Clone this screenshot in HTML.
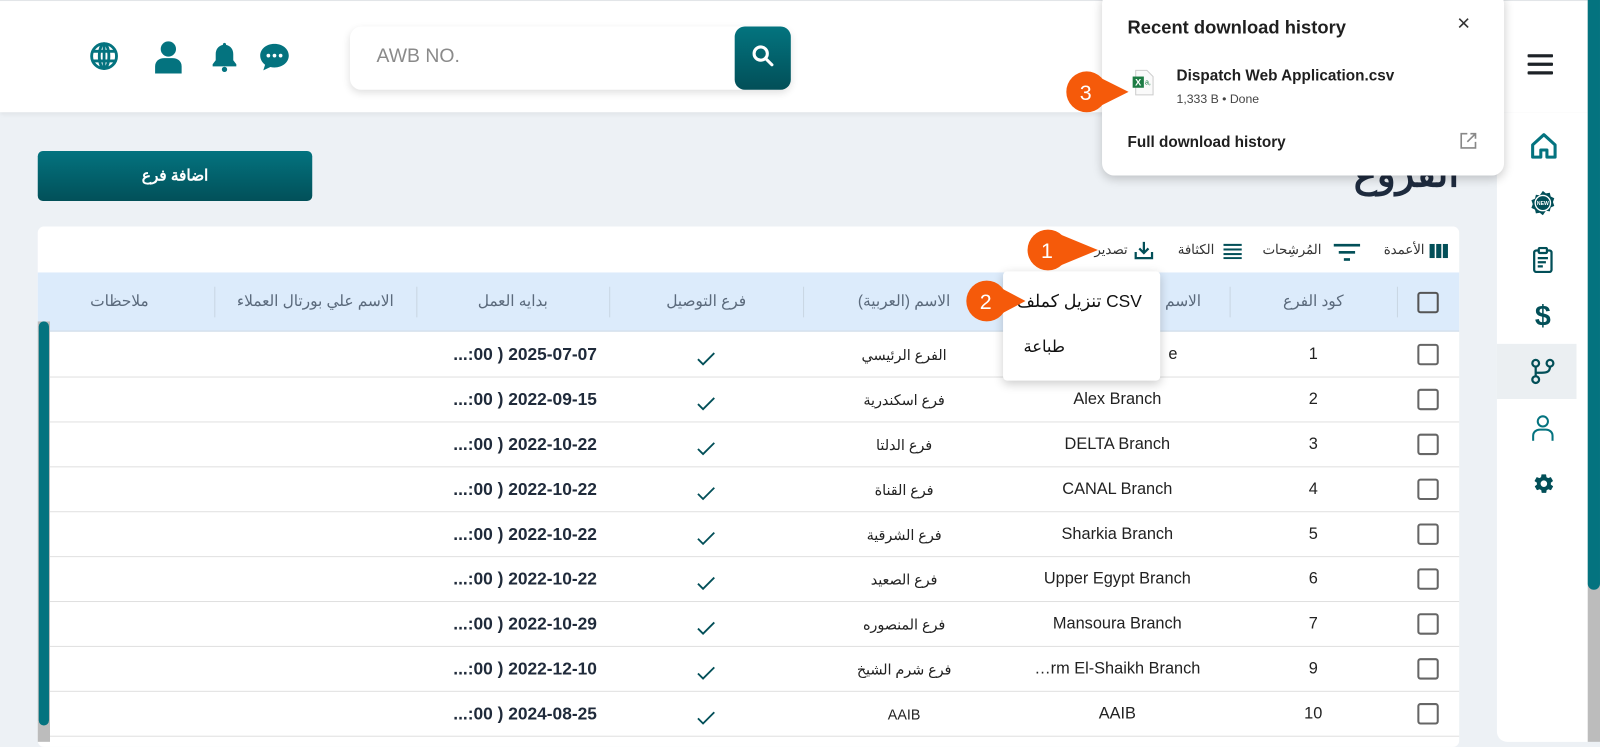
<!DOCTYPE html>
<html><head><meta charset="utf-8"><style>
*{box-sizing:border-box;margin:0;padding:0}
html,body{width:1600px;height:742px;overflow:hidden;background:#edf1f5;font-family:"Liberation Sans","Noto Sans CJK SC",sans-serif}
#w{position:absolute;left:0;top:0;width:1568px;height:727px;transform:scale(1.0204);transform-origin:0 0;background:#edf1f5}
.a{position:absolute}
.hdr{left:0;top:1;width:1556px;height:110px;background:#fff;box-shadow:0 2px 4px rgba(0,0,0,.06);border-top:1px solid #e2e5e8}
.cb{position:absolute;width:21px;height:21px;border:2px solid #666;border-radius:3px}
.row{position:absolute;left:48px;width:1382px;height:44px;border-bottom:1px solid #e0e0e0}
.c{position:absolute;top:0;height:44px;line-height:44px;text-align:center;font-size:16px;color:#222}
.hc{position:absolute;top:0;height:58px;line-height:58px;text-align:center;font-size:15px;color:#5b6a7c}
.sep{position:absolute;top:14px;width:1px;height:30px;background:#c9d6e3}
</style></head><body><div id="w">
<div class="a hdr"></div>
<svg class="a" style="left:87px;top:40px" width="30" height="30" viewBox="0 0 32 32" fill="none" stroke="#04737f" stroke-width="3"><circle cx="16" cy="16" r="13"/><ellipse cx="16" cy="16" rx="5" ry="13"/><path d="M3 11h26M3 21h26M16 3v26"/></svg>
<svg class="a" style="left:151px;top:40px" width="28" height="32" viewBox="0 0 28 32" fill="#04737f"><circle cx="14" cy="8" r="7.5"/><path d="M1 32v-7c0-5 4-8 9-8h8c5 0 9 3 9 8v7z"/></svg>
<svg class="a" style="left:207px;top:41px" width="26" height="30" viewBox="0 0 26 30" fill="#04737f"><path d="M13 1c1 0 1.6.8 1.6 2 4.5 1 7 4.5 7 9v6l3 4v2H1.4v-2l3-4v-6c0-4.5 2.5-8 7-9 0-1.2.6-2 1.6-2z"/><circle cx="13" cy="27" r="2.6"/></svg>
<svg class="a" style="left:254px;top:42px" width="30" height="28" viewBox="0 0 30 28" fill="#04737f"><path d="M15 1C7 1 1 6 1 12.5c0 3.6 1.9 6.8 4.8 8.9L4 27l7-3.3c1.3.3 2.6.4 4 .4 8 0 14-5.2 14-11.6S23 1 15 1z"/><circle cx="9" cy="12.5" r="1.8" fill="#fff"/><circle cx="15" cy="12.5" r="1.8" fill="#fff"/><circle cx="21" cy="12.5" r="1.8" fill="#fff"/></svg>
<div class="a" style="left:343px;top:26px;width:432px;height:62px;background:#fff;border-radius:11px;box-shadow:0 3px 8px rgba(0,0,0,.12)"></div>
<div class="a" style="left:369px;top:45px;font-size:19px;color:#8a8a8a">AWB NO.</div>
<div class="a" style="left:720px;top:26px;width:55px;height:62px;border-radius:10px;background:linear-gradient(#03747f,#024f58)"></div>
<svg class="a" style="left:736px;top:43px" width="24" height="24" viewBox="0 0 24 24" fill="none" stroke="#fff" stroke-width="3"><circle cx="9.5" cy="9.5" r="6.5"/><path d="M14.5 14.5l6 6" stroke-linecap="round"/></svg>
<div class="a" style="left:37px;top:148px;width:269px;height:49px;border-radius:5px;background:linear-gradient(#03737f,#025059);color:#fff;font-weight:bold;font-size:15px;text-align:center;line-height:49px">اضافة فرع</div>
<div class="a" style="left:1290px;top:148px;width:140px;text-align:right;font-size:38px;font-weight:bold;color:#1e2b3e">الفروع</div>
<div class="a" style="left:37px;top:222px;width:1393px;height:510px;background:#fff;border-radius:6px"></div>
<svg class="a" style="left:1400px;top:239px" width="20" height="14" viewBox="0 0 20 14" fill="#024f58"><rect x="1" y="0" width="5" height="14"/><rect x="7.5" y="0" width="5" height="14"/><rect x="14" y="0" width="5" height="14"/></svg>
<div class="a" style="left:1340px;top:237px;width:56px;text-align:right;font-size:13px;color:#333">الأعمدة</div>
<svg class="a" style="left:1307px;top:238px" width="26" height="18" viewBox="0 0 26 18" fill="#024f58"><rect x="0" y="1" width="26" height="2.6"/><rect x="5" y="8" width="16" height="2.6"/><rect x="10" y="15" width="6" height="2.6"/></svg>
<div class="a" style="left:1225px;top:237px;width:70px;text-align:right;font-size:13px;color:#333">المُرشِحات</div>
<svg class="a" style="left:1199px;top:238px" width="18" height="16" viewBox="0 0 18 16" fill="#024f58"><rect y="1" width="18" height="2"/><rect y="5.5" width="18" height="2"/><rect y="10" width="18" height="2"/><rect y="14" width="18" height="2"/></svg>
<div class="a" style="left:1130px;top:237px;width:60px;text-align:right;font-size:13px;color:#333">الكثافة</div>
<svg class="a" style="left:1111px;top:235px" width="20" height="20" viewBox="0 0 20 20" fill="none" stroke="#024f58" stroke-width="2.2"><path d="M10 2v11M5.5 8.5L10 13l4.5-4.5M2 12v6h16v-6"/></svg>
<div class="a" style="left:1050px;top:237px;width:55px;text-align:right;font-size:13px;color:#333">تصدير</div>
<div class="a" style="left:37px;top:267px;width:1393px;height:58px;background:#dcebfb;border-bottom:1px solid #cfdbe6">
 <div class="cb" style="left:1352px;top:19px;border-color:#555"></div>
 <div class="sep" style="left:1332px"></div>
 <div class="hc" style="left:1168px;width:164px">كود الفرع</div>
 <div class="sep" style="left:1168px"></div>
 <div class="hc" style="left:1100px;width:40px;text-align:right">الاسم</div>
 <div class="sep" style="left:948px"></div>
 <div class="hc" style="left:750px;width:198px">الاسم (العربية)</div>
 <div class="sep" style="left:750px"></div>
 <div class="hc" style="left:560px;width:190px">فرع التوصيل</div>
 <div class="sep" style="left:560px"></div>
 <div class="hc" style="left:371px;width:189px">بدايه العمل</div>
 <div class="sep" style="left:371px"></div>
 <div class="hc" style="left:173px;width:198px">الاسم علي بورتال العملاء</div>
 <div class="sep" style="left:173px"></div>
 <div class="hc" style="left:0;width:160px">ملاحظات</div>
</div>
<div id="rows"></div>
<div class="a" style="left:37px;top:315px;width:12px;height:412px;background:#bcbcbc"></div>
<div class="a" style="left:38px;top:315px;width:10px;height:396px;background:#04737f;border-radius:5px"></div>
<div class="a" style="left:1145px;top:326px;width:50px;height:44px;line-height:44px;font-size:16px;color:#222;text-align:left">e</div>
<div class="a" style="left:983px;top:266px;width:154px;height:107px;background:#fff;border-radius:4px;box-shadow:0 3px 10px rgba(0,0,0,.2)">
 <div style="position:absolute;right:18px;top:20px;font-size:17px;color:#111">تنزيل كملف CSV</div>
 <div style="position:absolute;left:20px;top:64px;font-size:16px;color:#111">طباعة</div>
</div>
<div class="a" style="left:1467px;top:110px;width:89px;height:617px;background:#fff;border-radius:0 0 0 10px"></div>
<div class="a" style="left:1467px;top:337px;width:78px;height:54px;background:#ebeff2"></div>
<svg class="a" style="left:1497px;top:53px" width="25" height="20" viewBox="0 0 25 20" fill="#1d2227"><rect y="0" width="25" height="3.2" rx="1"/><rect y="8.4" width="25" height="3.2" rx="1"/><rect y="16.8" width="25" height="3.2" rx="1"/></svg>
<svg class="a" style="left:1500px;top:130px" width="26" height="26" viewBox="0 0 26 26" fill="none" stroke="#04737f" stroke-width="3" stroke-linejoin="round"><path d="M2 12L13 2l11 10v12H16v-7h-6v7H2z"/></svg>
<svg class="a" style="left:1500px;top:187px" width="24" height="24" viewBox="0 0 24 24"><path d="M12 0l3 2.5 3.8-.6.9 3.7 3.5 1.7-1.3 3.7 1.3 3.7-3.5 1.7-.9 3.7-3.8-.6L12 24l-3-2.5-3.8.6-.9-3.7-3.5-1.7L2.1 13 .8 9.3l3.5-1.7.9-3.7 3.8.6z" fill="#024f58"/><circle cx="12" cy="12" r="7.5" fill="none" stroke="#fff" stroke-width="1.3"/><text x="12" y="14" font-size="5" fill="#fff" text-anchor="middle" font-family="Liberation Sans" font-weight="bold">NEW</text></svg>
<svg class="a" style="left:1502px;top:242px" width="20" height="26" viewBox="0 0 20 26" fill="none" stroke="#024f58" stroke-width="2.2"><rect x="1.5" y="3.5" width="17" height="21" rx="2"/><rect x="6" y="1" width="8" height="5" rx="1" fill="#fff"/><path d="M5 11h10M5 15h8M5 19h5"/></svg>
<div class="a" style="left:1500px;top:294px;width:24px;text-align:center;font-size:28px;font-weight:bold;color:#024f58">$</div>
<svg class="a" style="left:1500px;top:351px" width="24" height="26" viewBox="0 0 24 26" fill="none" stroke="#024f58" stroke-width="2.2"><circle cx="5" cy="5" r="3.3"/><circle cx="19" cy="5" r="3.3"/><circle cx="5" cy="21" r="3.3"/><path d="M5 8.3v9.4M19 8.3c0 5-3 6-8 6H5"/></svg>
<svg class="a" style="left:1501px;top:406px" width="22" height="26" viewBox="0 0 22 26" fill="none" stroke="#04737f" stroke-width="2"><circle cx="11" cy="7" r="5"/><path d="M1.5 26v-5c0-3.5 3-6 6.5-6h6c3.5 0 6.5 2.5 6.5 6v5"/></svg>
<svg class="a" style="left:1502px;top:463px" width="22" height="22" viewBox="0 0 24 24" fill="#024f58"><path d="M19.4 13c.1-.3.1-.7.1-1s0-.7-.1-1l2.1-1.6c.2-.2.2-.4.1-.6l-2-3.5c-.1-.2-.4-.3-.6-.2l-2.5 1c-.5-.4-1.1-.7-1.700-1l-.4-2.6c0-.3-.2-.4-.5-.4h-4c-.2 0-.5.2-.5.4l-.4 2.6c-.6.3-1.2.6-1.7 1l-2.5-1c-.2-.1-.5 0-.6.2l-2 3.5c-.1.2-.1.5.1.6L4.6 11c0 .3-.1.7-.1 1s0 .7.1 1l-2.1 1.6c-.2.2-.2.4-.1.6l2 3.5c.1.2.4.3.6.2l2.5-1c.5.4 1.1.7 1.7 1l.4 2.6c0 .2.2.4.5.4h4c.2 0 .5-.2.5-.4l.4-2.6c.6-.3 1.2-.6 1.7-1l2.5 1c.2.1.5 0 .6-.2l2-3.5c.1-.2.1-.5-.1-.6zM12 15.5a3.5 3.5 0 110-7 3.5 3.5 0 010 7z"/></svg>
<div class="a" style="left:1556px;top:0;width:12px;height:727px;background:#bcbcbc"></div>
<div class="a" style="left:1556px;top:0;width:12px;height:578px;background:#04737f;border-radius:0 0 6px 6px"></div>
<div class="a" style="left:1080px;top:-8px;width:394px;height:180px;background:#fff;border-radius:12px;box-shadow:0 3px 10px rgba(0,0,0,.2)">
 <div style="position:absolute;left:25px;top:25px;font-size:18px;font-weight:bold;color:#1f1f1f">Recent download history</div>
 <div style="position:absolute;left:348px;top:18px;font-size:22px;color:#333">×</div>
 <svg style="position:absolute;left:29px;top:76px" width="22" height="26" viewBox="0 0 22 26"><path d="M4 1h11l6 6v18H4z" fill="#fafafa" stroke="#ccc"/><rect x="1" y="7" width="11" height="11" fill="#1d7c44"/><text x="6.5" y="16" font-size="9" fill="#fff" text-anchor="middle" font-family="Liberation Sans" font-weight="bold">X</text><text x="16" y="15" font-size="7" fill="#1d7c44" text-anchor="middle" font-family="Liberation Sans">a,</text></svg>
 <div style="position:absolute;left:73px;top:74px;font-size:15px;font-weight:bold;color:#1f1f1f">Dispatch Web Application.csv</div>
 <div style="position:absolute;left:73px;top:98px;font-size:12px;color:#444">1,333 B • Done</div>
 <div style="position:absolute;left:25px;top:139px;font-size:15px;font-weight:bold;color:#1f1f1f">Full download history</div>
 <svg style="position:absolute;left:350px;top:137px" width="18" height="18" viewBox="0 0 18 18" fill="none" stroke="#888" stroke-width="1.6"><path d="M8 2H2v14h14v-6M11 2h5v5M16 2L8 10"/></svg>
</div>
<svg class="a" style="left:1000px;top:220px" width="80" height="50" viewBox="0 0 80 50"><circle cx="27" cy="25" r="20" fill="#f55a0a"/><path d="M30 6L76 25 30 44z" fill="#f55a0a"/><text x="26" y="33" font-size="21" fill="#fff" text-anchor="middle" font-family="Liberation Sans">1</text></svg>
<svg class="a" style="left:935px;top:270px" width="75" height="50" viewBox="0 0 75 50"><circle cx="32" cy="25" r="20" fill="#f55a0a"/><path d="M34 6L70 25 34 44z" fill="#f55a0a"/><text x="31" y="33" font-size="21" fill="#fff" text-anchor="middle" font-family="Liberation Sans">2</text></svg>
<svg class="a" style="left:1030px;top:65px" width="80" height="50" viewBox="0 0 80 50"><circle cx="35" cy="25" r="20" fill="#f55a0a"/><path d="M38 6L76 25 38 44z" fill="#f55a0a"/><text x="34" y="33" font-size="21" fill="#fff" text-anchor="middle" font-family="Liberation Sans">3</text></svg>
<script>
var d=[["1","","الفرع الرئيسي","2025-07-07"],["2","Alex Branch","فرع اسكندرية","2022-09-15"],["3","DELTA Branch","فرع الدلتا","2022-10-22"],["4","CANAL Branch","فرع القناة","2022-10-22"],["5","Sharkia Branch","فرع الشرقية","2022-10-22"],["6","Upper Egypt Branch","فرع الصعيد","2022-10-22"],["7","Mansoura Branch","فرع المنصوره","2022-10-29"],["9","…rm El-Shaikh Branch","فرع شرم الشيخ","2022-12-10"],["10","AAIB","AAIB","2024-08-25"]];
var h="";d.forEach(function(r,i){var t=326+i*44;
h+='<div class="row" style="top:'+t+'px"><div class="cb" style="left:1341px;top:11px"></div>'+
'<div class="c" style="left:1157px;width:164px">'+r[0]+'</div>'+
'<div class="c" style="left:937px;width:220px;overflow:hidden;white-space:nowrap">'+r[1]+'</div>'+
'<div class="c" style="left:739px;width:198px;font-size:14px">'+r[2]+'</div>'+
'<div class="c" style="left:549px;width:190px"><svg width="18" height="14" viewBox="0 0 18 14" style="vertical-align:middle;margin-top:8px"><path d="M1 7l5 5L17 1" fill="none" stroke="#024f58" stroke-width="1.8"/></svg></div>'+
'<div class="c" style="left:360px;width:177px;text-align:right;font-weight:bold;font-size:17px;color:#1f2a3a">...:00 ) '+r[3]+'</div></div>';});
document.getElementById("rows").innerHTML=h;
</script>
</div></body></html>
